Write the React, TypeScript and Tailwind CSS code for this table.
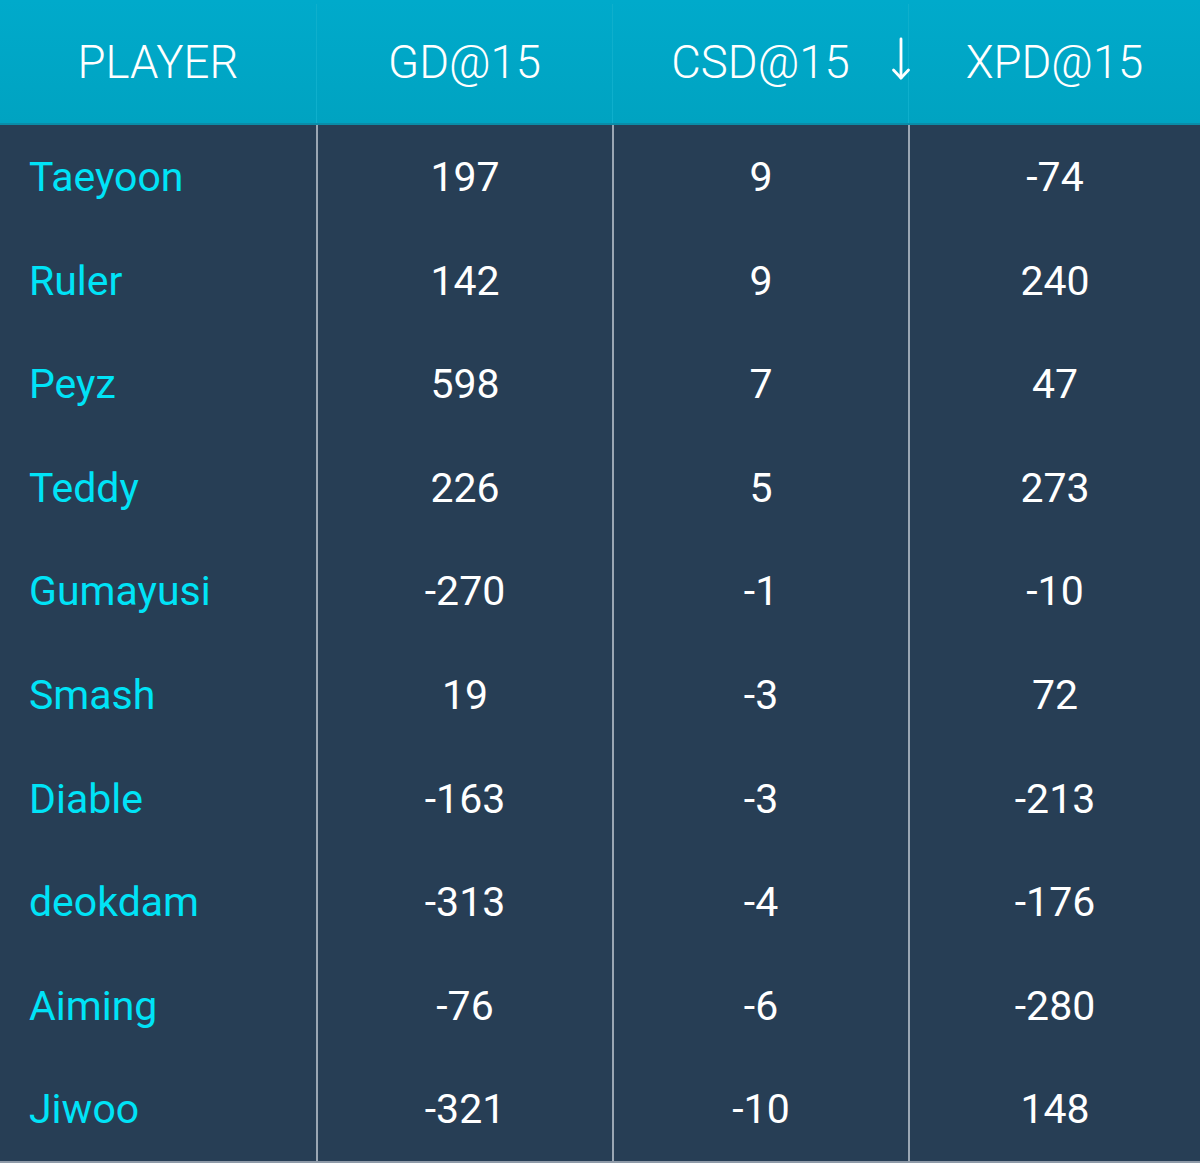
const ROWS: [string, string, string, string][] = [
  ['Taeyoon', '197', '9', '-74'],
  ['Ruler', '142', '9', '240'],
  ['Peyz', '598', '7', '47'],
  ['Teddy', '226', '5', '273'],
  ['Gumayusi', '-270', '-1', '-10'],
  ['Smash', '19', '-3', '72'],
  ['Diable', '-163', '-3', '-213'],
  ['deokdam', '-313', '-4', '-176'],
  ['Aiming', '-76', '-6', '-280'],
  ['Jiwoo', '-321', '-10', '148'],
];

const COLS = 'grid grid-cols-[316px_296px_296px_1fr]';

function SortArrow() {
  return (
    <svg width="20" height="44" viewBox="0 0 20 44" fill="none" stroke="white" strokeWidth="2.8" strokeLinecap="round" strokeLinejoin="round">
      <path d="M10 2 V41" />
      <path d="M2.5 33 L10 41 L17.5 33" />
    </svg>
  );
}

export default function App() {
  return (
    <div className="w-[1200px] h-[1163px] bg-[#273e55] flex flex-col" style={{ fontFamily: 'Roboto, "Liberation Sans", sans-serif' }}>
      {/* header */}
      <div className={`${COLS} h-[125px] shrink-0 pt-[4px] bg-gradient-to-b from-[#00aacb] to-[#00a3c1] border-b-2 border-[#0a8ca8] text-white font-light text-[45.5px]`}>
        <div className="flex items-center justify-center">PLAYER</div>
        <div className="flex items-center justify-center border-l border-[#0fafcc]">GD@15</div>
        <div className="flex items-center justify-center border-l border-[#0fafcc]">
          <span className="relative">
            CSD@15
            <span className="absolute left-[220px] top-[8px]"><SortArrow /></span>
          </span>
        </div>
        <div className="flex items-center justify-center border-l border-[#0fafcc]">XPD@15</div>
      </div>

      {/* body */}
      <div className="flex-1 flex flex-col border-b-2 border-[#8e9aa8]">
        {ROWS.map(([name, gd, csd, xpd]) => (
          <div key={name} className={`${COLS} flex-1 text-[41px]`}>
            <div className="flex items-center pl-[29px] pt-[2px] text-[#00e3f7]">{name}</div>
            <div className="flex items-center justify-center pt-[2px] text-white border-l-2 border-[#9aa6b3]">{gd}</div>
            <div className="flex items-center justify-center pt-[2px] text-white border-l-2 border-[#9aa6b3]">{csd}</div>
            <div className="flex items-center justify-center pt-[2px] text-white border-l-2 border-[#9aa6b3]">{xpd}</div>
          </div>
        ))}
      </div>
    </div>
  );
}
